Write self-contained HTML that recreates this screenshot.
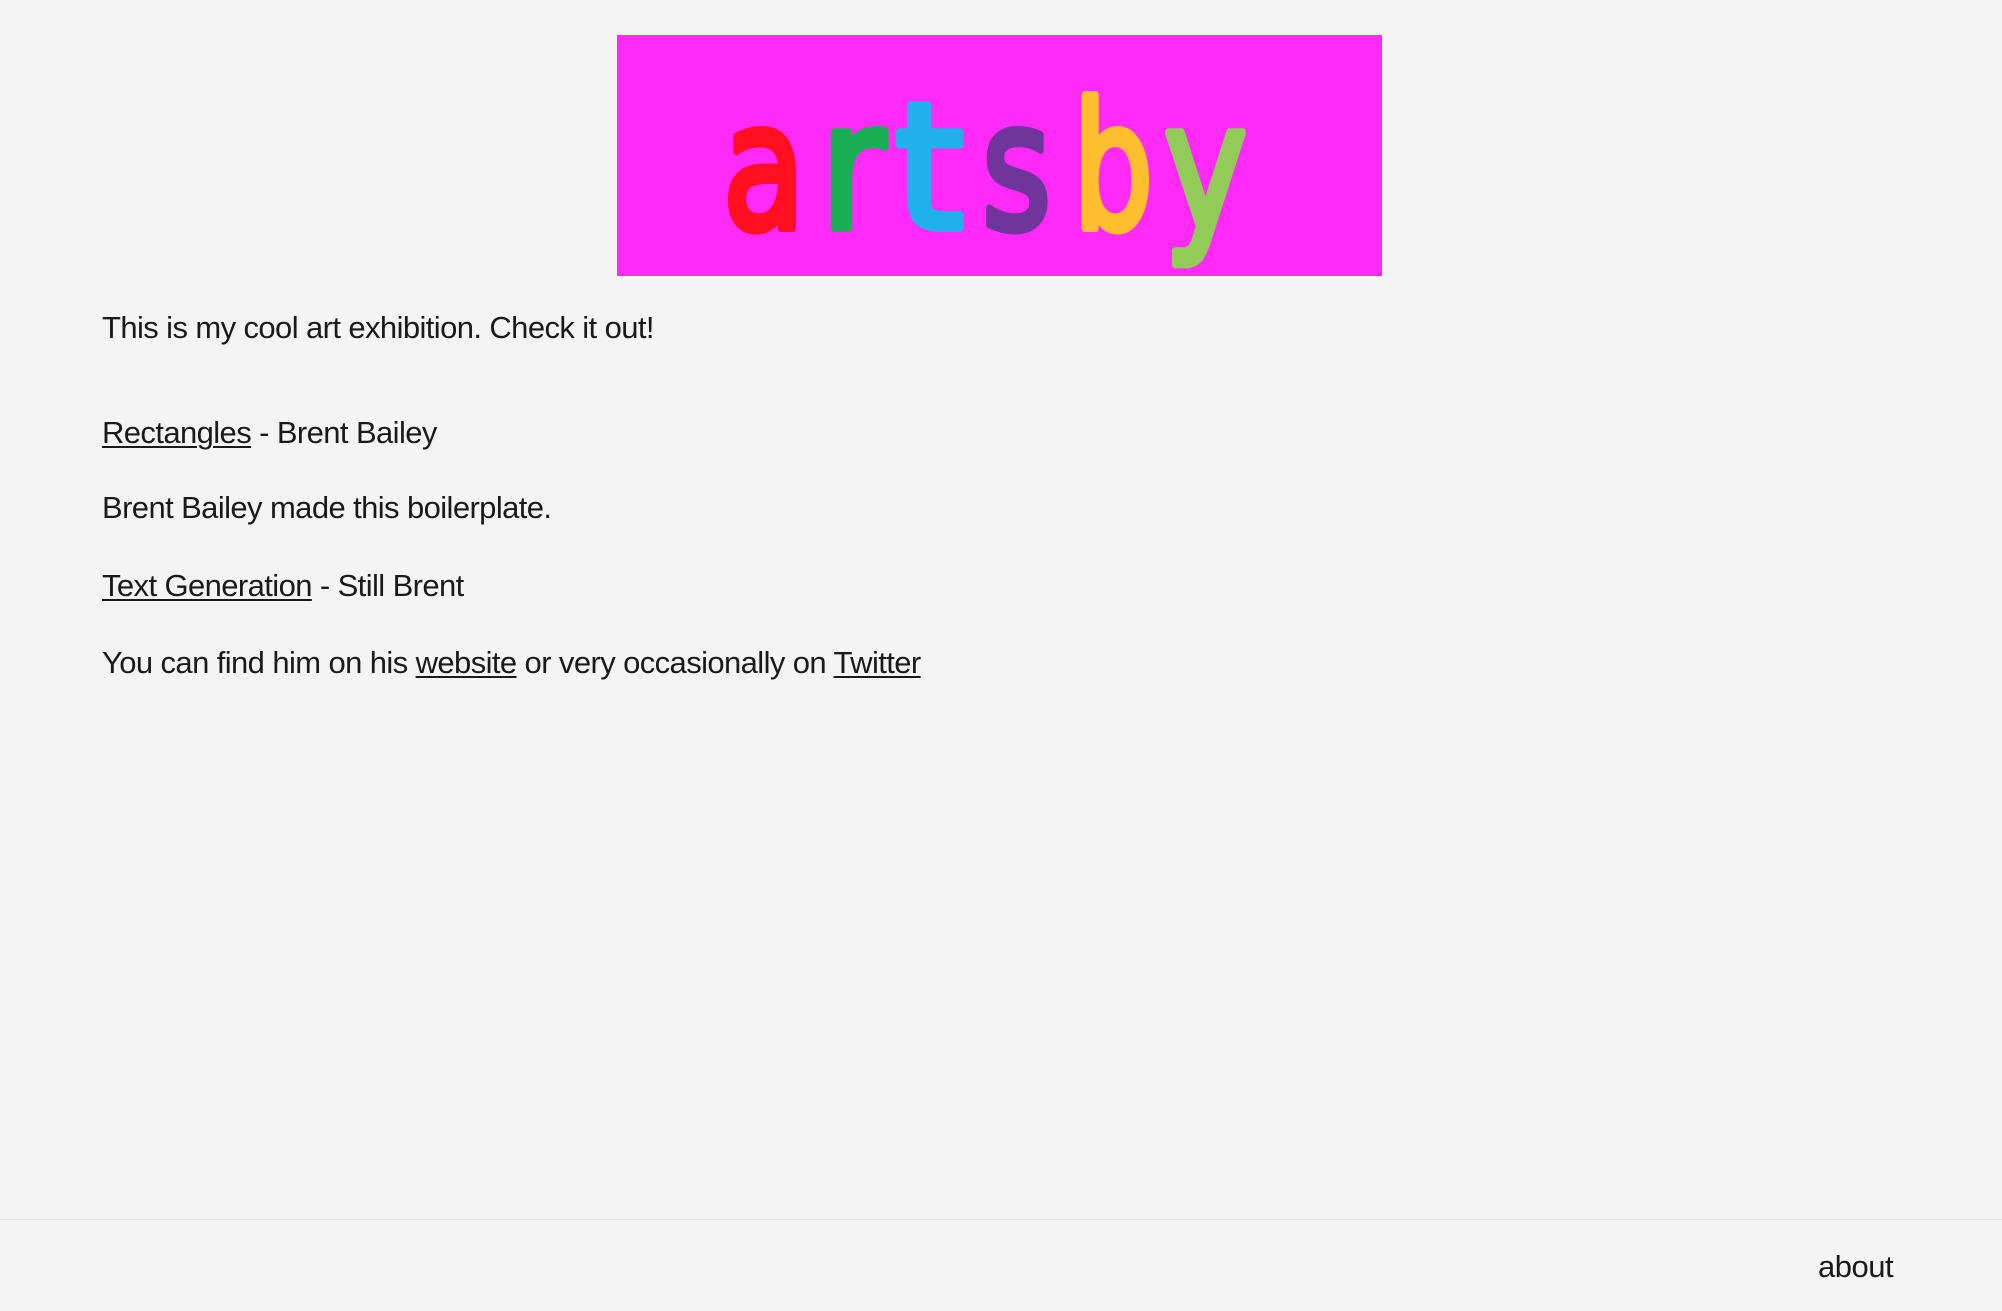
<!DOCTYPE html>
<html><head><meta charset="utf-8"><style>
html,body{margin:0;padding:0;background:#f4f4f4;}
body{width:2002px;height:1310px;position:relative;overflow:hidden;font-family:"Liberation Sans",Arial,sans-serif;color:#1a1a1a;}
.l{position:absolute;left:102px;font-size:31px;line-height:36px;letter-spacing:-0.6px;white-space:nowrap;}
a{color:#1a1a1a;text-decoration:underline;text-underline-offset:3px;text-decoration-thickness:2px;}
#foot{position:absolute;left:0;top:1219px;width:2002px;height:91px;border-top:1px solid #e2e2e2;}
#about{position:absolute;left:1818px;top:1249px;font-size:31px;line-height:36px;letter-spacing:-0.5px;}
svg text{font-family:"DejaVu Sans",sans-serif;font-weight:normal;font-size:175px;stroke-linejoin:round;stroke-width:8px;}
</style></head><body>
<svg style="position:absolute;left:0;top:0" width="2002" height="300">
<rect x="617" y="35" width="765" height="241" fill="#ff2af8"/>
<text x="723" y="228" textLength="82" lengthAdjust="spacingAndGlyphs" fill="#ff0f1f" stroke="#ff0f1f">a</text>
<text x="820" y="228" textLength="65" lengthAdjust="spacingAndGlyphs" fill="#1aaf55" stroke="#1aaf55">r</text>
<text x="895" y="228" textLength="69" lengthAdjust="spacingAndGlyphs" fill="#21b0ec" stroke="#21b0ec">t</text>
<text x="982" y="228" textLength="69" lengthAdjust="spacingAndGlyphs" fill="#70359b" stroke="#70359b">s</text>
<text x="1073" y="228" textLength="80" lengthAdjust="spacingAndGlyphs" fill="#ffbe2d" stroke="#ffbe2d">b</text>
<text x="1164" y="228" textLength="83" lengthAdjust="spacingAndGlyphs" fill="#92cb57" stroke="#92cb57">y</text>
</svg>
<div class="l" style="top:310px">This is my cool art exhibition. Check it out!</div>
<div class="l" style="top:415px"><a>Rectangles</a> - Brent Bailey</div>
<div class="l" style="top:490px">Brent Bailey made this boilerplate.</div>
<div class="l" style="top:568px"><a>Text Generation</a> - Still Brent</div>
<div class="l" style="top:645px">You can find him on his <a>website</a> or very occasionally on <a>Twitter</a></div>
<div id="foot"></div>
<div id="about">about</div>
</body></html>
